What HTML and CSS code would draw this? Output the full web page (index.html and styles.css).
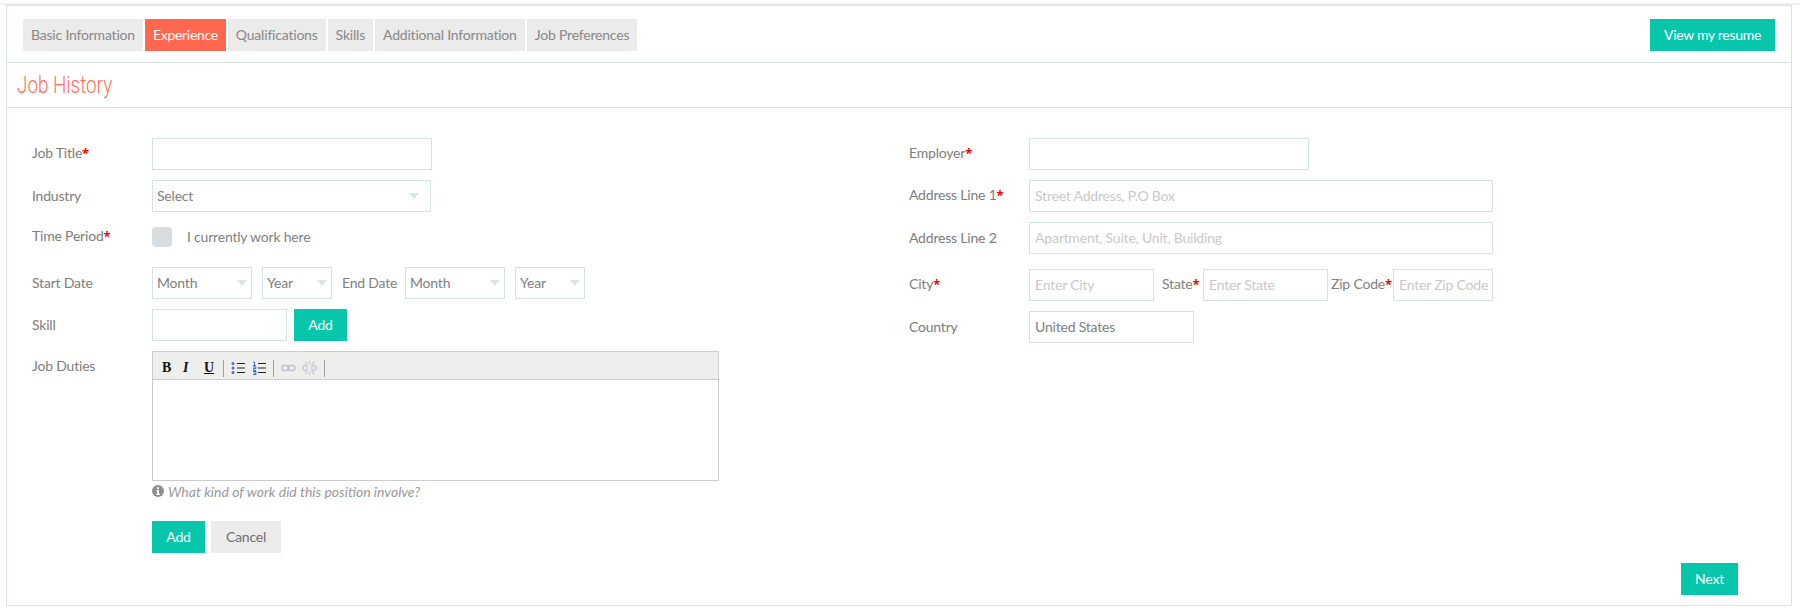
FILE: index.html
```html
<!DOCTYPE html>
<html lang="en">
<head>
<meta charset="utf-8">
<title>Job History</title>
<link rel="stylesheet" href="styles.css">
</head>
<body>
<div class="topline"></div>
<main class="panel">
  <header class="tabbar">
    <nav class="tabs">
      <a class="tab">Basic Information</a>
      <a class="tab active">Experience</a>
      <a class="tab">Qualifications</a>
      <a class="tab">Skills</a>
      <a class="tab">Additional Information</a>
      <a class="tab">Job Preferences</a>
    </nav>
    <a class="btn resume">View my resume</a>
  </header>
  <h1 class="title"><span class="title-text">Job History</span></h1>
  <form class="form">
    <section class="col col-left">
      <div class="row">
        <label class="lbl">Job Title<b class="req">*</b></label>
        <input class="field w280" type="text">
      </div>
      <div class="row">
        <label class="lbl">Industry</label>
        <span class="sel w279">Select</span>
      </div>
      <div class="row row-check">
        <label class="lbl">Time Period<b class="req">*</b></label>
        <span class="check"></span>
        <span class="check-text">I currently work here</span>
      </div>
      <div class="row">
        <label class="lbl">Start Date</label>
        <span class="sel w100">Month</span>
        <span class="sel w70 ml10">Year</span>
        <span class="inline-lbl">End Date</span>
        <span class="sel w100">Month</span>
        <span class="sel w70 ml10">Year</span>
      </div>
      <div class="row">
        <label class="lbl">Skill</label>
        <input class="field w135" type="text">
        <a class="btn add-skill">Add</a>
      </div>
      <div class="row row-editor">
        <label class="lbl lbl-top">Job Duties</label>
        <div class="editor-wrap">
          <div class="editor">
            <div class="toolbar">
              <span class="tool t-b">B</span>
              <span class="tool t-i">I</span>
              <span class="tool t-u">U</span>
              <span class="sep"></span>
              <svg class="ico" width="14" height="14" viewBox="0 0 14 14"><g fill="#4a6fb5"><circle cx="2" cy="2.5" r="1.5"/><circle cx="2" cy="7" r="1.5"/><circle cx="2" cy="11.5" r="1.5"/></g><path d="M6 2.500h8M6 7h8M6 11.500h8" stroke="#222" stroke-width="1"/></svg>
              <svg class="ico ml7" width="14" height="14" viewBox="0 0 14 14"><path d="M1 1h1.500v3M1 4.500h3M1 6h3v1.500H1.500V9.500H4M1 10.500h3v3H1M2 12h2" fill="none" stroke="#3f6bc4" stroke-width="1"/><path d="M6 2.500h8M6 7h8M6 11.500h8" stroke="#222" stroke-width="1"/></svg>
              <span class="sep sep2"></span>
              <svg class="ico" width="15" height="14" viewBox="0 0 15 14"><g fill="none" stroke="#bcc4d0" stroke-width="1.500"><rect x="1" y="4.500" width="7" height="5" rx="2.500"/><rect x="7" y="4.500" width="7" height="5" rx="2.500"/></g></svg>
              <svg class="ico ml6" width="15" height="14" viewBox="0 0 15 14"><g fill="none" stroke="#c4cad3" stroke-width="1.300"><path d="M6 4.500H3.500a2.500 2.500 0 0 0 0 5H6M9 4.500h2.500a2.500 2.500 0 0 1 0 5H9"/><path d="M4 7h2M9 7h2M7.500 0v3M7.500 11v3M3 1l2 2M12 1l-2 2M3 13l2-2M12 13l-2-2"/></g></svg>
              <span class="sep sep3"></span>
            </div>
            <div class="editor-body"></div>
          </div>
          <p class="hint">
            <svg class="hint-ico" width="12" height="12" viewBox="0 0 12 12"><circle cx="6" cy="6" r="6" fill="#8f8f8f"/><path d="M5 2.300h2v1.600H5zM4.500 5h2.500v3.700h.8V10H4.300V8.700h.9V6.300h-.7z" fill="#fff"/></svg>
            <em class="hint-text">What kind of work did this position involve?</em>
          </p>
          <div class="actions">
            <a class="btn add">Add</a>
            <a class="btn cancel">Cancel</a>
          </div>
        </div>
      </div>
    </section>
    <section class="col col-right">
      <div class="row">
        <label class="lbl">Employer<b class="req">*</b></label>
        <input class="field w280" type="text">
      </div>
      <div class="row">
        <label class="lbl">Address Line 1<b class="req">*</b></label>
        <input class="field w464" type="text" placeholder="Street Address, P.O Box">
      </div>
      <div class="row row-gap15">
        <label class="lbl">Address Line 2</label>
        <input class="field w464" type="text" placeholder="Apartment, Suite, Unit, Building">
      </div>
      <div class="row">
        <label class="lbl">City<b class="req">*</b></label>
        <input class="field w125" type="text" placeholder="Enter City">
        <label class="lbl-state">State<b class="req">*</b></label>
        <input class="field w125" type="text" placeholder="Enter State">
        <label class="lbl-zip">Zip Code<b class="req">*</b></label>
        <input class="field w100" type="text" placeholder="Enter Zip Code">
      </div>
      <div class="row">
        <label class="lbl">Country</label>
        <input class="field w165" type="text" value="United States">
      </div>
    </section>
  </form>
  <footer class="foot"><a class="btn next">Next</a></footer>
</main>
</body>
</html>
```
FILE: styles.css
```css
* { box-sizing: border-box; }
html, body { margin: 0; padding: 0; background: #fff; }
body {
  height: 613px;
  padding-top: 3px;
  font-family: Lato, "Noto Sans", sans-serif;
  font-size: 14px;
  letter-spacing: -0.2px;
  color: #7f7f7f;
  overflow: hidden;
}
.topline { height: 2px; background: #eceff1; }
.panel {
  margin: 0 8px 0 6px;
  border: 1px solid #d7e2e8;
  height: 601px;
}
.tabbar {
  display: flex;
  justify-content: space-between;
  height: 57px;
  padding: 13px 16px 0 16px;
  border-bottom: 1px solid #d7e2e8;
}
.tabs { display: flex; gap: 2px; height: 32px; }
.tab {
  display: flex;
  align-items: center;
  height: 32px;
  padding: 0 8px 2px;
  background: #ebebeb;
  color: #888;
}
.tab.active { background: #ff674f; color: #fff; letter-spacing: -0.3px; }
.btn {
  display: flex;
  align-items: center;
  justify-content: center;
  height: 32px;
  padding-bottom: 2px;
  background: #08c6ab;
  color: #fff;
}
.resume { width: 125px; letter-spacing: -0.3px; }
.title {
  margin: 0;
  height: 45px;
  padding: 0 0 0 10px;
  border-bottom: 1px solid #d7e2e8;
  font-family: Roboto, sans-serif;
  font-weight: 300;
  font-size: 23px;
  letter-spacing: 0;
  line-height: 46px;
  color: #ff6f5a;
}
.title-text { display: inline-block; transform: scaleX(0.82); transform-origin: left center; }
.form { display: flex; padding: 30px 0 0 25px; }
.col-left { width: 877px; }
.col-right { flex: 1; }
.row { display: flex; align-items: center; min-height: 32px; margin-bottom: 10px; }
.row-check { min-height: 30px; margin-bottom: 15px; }
.row-gap15 { margin-bottom: 15px; }
.row-editor { align-items: flex-start; margin-bottom: 0; }
.lbl { flex: none; width: 120px; padding-bottom: 2px; color: #7d7d7d; }
.lbl-top { padding: 6px 0 0; }
.req { font-family: "Noto Sans", sans-serif; font-size: 13px; letter-spacing: 0; color: #f00; font-weight: 700; }
.field {
  flex: none;
  height: 32px;
  padding: 0 0 2px 5px;
  border: 1px solid #d3e2e6;
  border-radius: 0;
  outline: 0;
  background: #fff;
  font: inherit;
  letter-spacing: inherit;
  color: #7f7f7f;
}
.field::placeholder { color: #c9c9c9; opacity: 1; }
.sel {
  position: relative;
  flex: none;
  display: flex;
  align-items: center;
  height: 32px;
  padding: 0 4px 1px;
  border: 1px solid #d3e2e6;
  color: #7f7f7f;
}
.sel::after {
  content: "";
  position: absolute;
  right: 11px;
  top: 12px;
  border-style: solid;
  border-width: 6px 5.500px 0;
  border-color: #d9e5ea transparent transparent;
}
.w70 { width: 70px; }
.w100 { width: 100px; }
.w125 { width: 125px; }
.w135 { width: 135px; }
.w165 { width: 165px; }
.w279 { width: 279px; }
.w280 { width: 280px; }
.w464 { width: 464px; }
.ml10 { margin-left: 10px; }
.w70::after, .w100::after { right: 4px; }
.check { width: 20px; height: 20px; border-radius: 4px; background: #d7dcde; }
.check-text { margin-left: 15px; padding-bottom: 1px; }
.inline-lbl { width: 73px; padding: 0 0 2px 10px; }
.add-skill { width: 53px; margin-left: 7px; }
.editor-wrap { width: 567px; }
.editor { height: 130px; border: 1px solid #ccc; }
.toolbar {
  display: flex;
  align-items: center;
  height: 28px;
  padding: 5px 0 0 9px;
  background: #eeeeec;
  border-bottom: 1px solid #ccc;
}
.tool {
  font-family: "Liberation Serif", serif;
  font-weight: 700;
  font-size: 14px;
  letter-spacing: 0;
  color: #111;
  width: 21px;
}
.t-i { font-style: italic; }
.t-u { text-decoration: underline; width: 19px; }
.sep { width: 1px; height: 17px; background: #9aa0aa; margin-right: 7px; }
.sep2 { margin-left: 7px; }
.sep3 { margin-left: 7px; }
.ico { flex: none; }
.ml7 { margin-left: 7px; }
.ml6 { margin-left: 6px; }
.hint { display: flex; align-items: center; gap: 4px; height: 20px; margin: 0; color: #999; }
.hint-ico { flex: none; }
.hint-text { letter-spacing: 0; }
.actions { display: flex; gap: 6px; margin-top: 20px; }
.add { width: 53px; }
.cancel { width: 70px; background: #ebebeb; color: #6f6f6f; }
.lbl-state { flex: none; width: 41px; margin-left: 8px; padding-bottom: 2px; }
.lbl-zip { flex: none; width: 62px; margin-left: 3px; padding-bottom: 2px; }
.foot { display: flex; justify-content: flex-end; padding: 10px 53px 0 0; }
.next { width: 57px; }
```
